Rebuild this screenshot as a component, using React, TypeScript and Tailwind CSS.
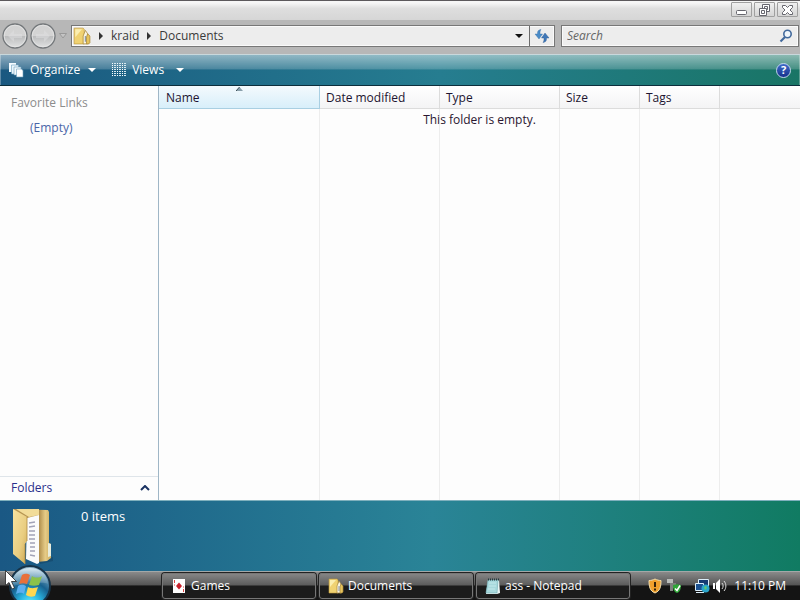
import React from "react";

const columns = [
  { label: "Name", width: "w-[161px]" },
  { label: "Date modified", width: "w-[120px]" },
  { label: "Type", width: "w-[120px]" },
  { label: "Size", width: "w-[80px]" },
  { label: "Tags", width: "w-[80px]" },
];

function FolderIcon({ size }: { size: string }) {
  return (
    <svg viewBox="0 0 16 16" className={size} aria-hidden="true">
      <path d="M1 1h8l1 1v13H1z" fill="#f0d272" stroke="#c09a3c" strokeWidth="0.6" />
      <path d="M2 2h6L2 9z" fill="#fbeeb0" />
      <path d="M9 8l2-5 2 3v9H9z" fill="#faf5e2" stroke="#a98838" strokeWidth="0.7" />
      <path d="M13 6l2 2v6l-1 1h-2V9z" fill="#e6c45e" stroke="#a98838" strokeWidth="0.7" />
      <path d="M11 8v5" stroke="#8996a8" />
    </svg>
  );
}

function LargeFolder() {
  return (
    <svg viewBox="0 0 42 60" className="h-[60px] w-[42px]" aria-hidden="true">
      <defs>
        <linearGradient id="lf-front" x1="0" x2="1" y1="0" y2="1">
          <stop offset="0" stopColor="#f7e3a0" />
          <stop offset="0.6" stopColor="#e9cd80" />
          <stop offset="1" stopColor="#cba650" />
        </linearGradient>
        <linearGradient id="lf-back" x1="0" x2="1">
          <stop offset="0" stopColor="#b59452" />
          <stop offset="0.7" stopColor="#b59452" />
          <stop offset="0.85" stopColor="#e6cb86" />
          <stop offset="1" stopColor="#cdae62" />
        </linearGradient>
      </defs>
      <path d="M28 53l13-4v4l-13 3z" fill="#123f60" opacity="0.5" />
      <path d="M1 1l35 1 1 2v31l2 1v14l-4 3-10 1z" fill="url(#lf-back)" />
      <path d="M36 35l3 1v12l-3 1z" fill="#e8ecdc" />
      <path d="M4 1h23v6L17 9z" fill="#f2dc98" />
      <path d="M15 10l12-3v48l-2 1-11-5z" fill="#fbfbfb" />
      <path d="M17 15l6-1M17 19l6-1M17 23h6M17 27h6M17 31h6M18 35h5M18 39h5M18 43h5M18 47l5 1" stroke="#a2a3b7" strokeWidth="1.5" />
      <path d="M1 1l14 8v24l-2 3v20L1 46z" fill="url(#lf-front)" />
      <path d="M13 36v20M15 9v24" stroke="#b08b3f" strokeWidth="0.8" />
    </svg>
  );
}

function NavArrow({ back }: { back?: boolean }) {
  return (
    <svg viewBox="0 0 26 26" className="size-[26px]" aria-hidden="true">
      <defs>
        <linearGradient id="nav-fill" x2="0" y2="1">
          <stop offset="0" stopColor="#d2d2d2" />
          <stop offset="0.48" stopColor="#d4d4d4" />
          <stop offset="0.52" stopColor="#bcbdbe" />
          <stop offset="1" stopColor="#e2e3e3" />
        </linearGradient>
      </defs>
      <circle cx="13" cy="13" r="12" fill="url(#nav-fill)" stroke="#73777a" strokeWidth="1.3" />
      <circle cx="13" cy="13" r="10.800" fill="none" stroke="#e6e6e6" strokeWidth="0.8" />
      <path
        d={back ? "M6 13l6-6v4h8v4h-8v4z" : "M20 13l-6-6v4H6v4h8v4z"}
        fill="#dfe0e1"
        opacity="0.5"
      />
    </svg>
  );
}

function Triangle() {
  return (
    <svg viewBox="0 0 8 4" className="h-1 w-2" aria-hidden="true">
      <path d="M0 0h8L4 4z" fill="currentColor" />
    </svg>
  );
}

function Chevron() {
  return (
    <svg viewBox="0 0 4 8" className="h-2 w-1 text-[#333]" aria-hidden="true">
      <path d="M0 0l4 4-4 4z" fill="currentColor" />
    </svg>
  );
}

function OrganizeIcon() {
  return (
    <svg viewBox="0 0 16 16" className="size-4" aria-hidden="true">
      <path d="M1 1h7v9H1z" fill="#f4fbff" />
      <path d="M3.500 3h7v9h-7z" fill="#eaf6fc" stroke="#6ba0bd" strokeWidth="0.6" />
      <path d="M6 5h7v8H6z" fill="#f3fafd" stroke="#6ba0bd" strokeWidth="0.6" />
      <path d="M8.500 7h5l1.500 1.500V15H8.500z" fill="#fff" stroke="#6ba0bd" strokeWidth="0.6" />
    </svg>
  );
}

function ViewsIcon() {
  return (
    <svg viewBox="0 0 14 14" className="size-[14px]" aria-hidden="true">
      <path d="M.5 0v14M5.500 0v14M10.500 0v14" stroke="#fff" strokeDasharray="1 1" />
      <path d="M3 0v14M8 0v14M13 0v14" stroke="#d7eaf1" strokeWidth="2" strokeDasharray="1 1" />
    </svg>
  );
}

function WindowButton({ kind }: { kind: "Minimize" | "Restore" | "Close" }) {
  return (
    <button
      type="button"
      aria-label={kind}
      className="flex h-[15px] w-[21px] items-center justify-center rounded-[1px] border border-[#a0a0a0] bg-linear-to-b from-[#f0f0f0] to-[#d5d5d5]"
    >
      <svg viewBox="0 0 13 12" className="h-3 w-[13px] shrink-0" fill="none" stroke="#66666e" aria-hidden="true">
        {kind === "Minimize" && <rect x="1.500" y="6.500" width="10" height="4" rx="1" fill="#fff" />}
        {kind === "Restore" && (
          <>
            <path d="M4.500.500h7v7h-7z" fill="#fff" />
            <path d="M6.500 2.500h3v3h-3z" />
            <path d="M1.500 4.500h7v7h-7z" fill="#fff" />
            <path d="M3.500 6.500h3v3h-3z" />
          </>
        )}
        {kind === "Close" && (
          <path
            d="M1.500 1.500h3l2 2 2-2h3v2L9 6l2.500 2.500v2h-3l-2-2-2 2h-3v-2L4 6 1.500 3.500z"
            fill="#fff"
          />
        )}
      </svg>
    </button>
  );
}

function RefreshIcon() {
  return (
    <svg viewBox="0 0 16 16" className="size-4" aria-hidden="true">
      <path d="M7 1.500C3.500 2 3.500 4 3.500 6H1l4 5 3.500-5H6c0-2 0-3 1-4.500z" fill="#4a8cc8" stroke="#3a6fa8" strokeWidth="0.4" />
      <path d="M9 14.500c3.500-.500 3.500-2.500 3.500-4.500H15l-4-5-3.500 5H10c0 2 0 3-1 4.500z" fill="#3f78b8" stroke="#2a5590" strokeWidth="0.4" />
    </svg>
  );
}

function StartOrb() {
  return (
    <svg viewBox="0 0 42 42" className="size-[42px]" aria-hidden="true">
      <defs>
        <radialGradient id="orb" cx="0.5" cy="0.95" r="0.9">
          <stop offset="0" stopColor="#6af0ff" />
          <stop offset="0.3" stopColor="#2ab4e0" />
          <stop offset="0.6" stopColor="#17618f" />
          <stop offset="1" stopColor="#8fb5ca" />
        </radialGradient>
        <linearGradient id="orb-gloss" x2="0" y2="1">
          <stop offset="0" stopColor="#e2f0f7" stopOpacity="0.9" />
          <stop offset="1" stopColor="#7fa9c1" stopOpacity="0.3" />
        </linearGradient>
      </defs>
      <circle cx="21" cy="21" r="20" fill="url(#orb)" stroke="#173348" strokeWidth="2" />
      <path d="M3 19C4 8 12 3 21 3s17 5 18 16c-9-4-27 4-36 0z" fill="url(#orb-gloss)" />
      <path d="M13 10c3-2 6-1 8 0l-3 9c-3-1-5-1-8 0z" fill="#e8703a" />
      <path d="M23 11c3 2 7 2 10 0l-3 9c-3 1-7 1-10 0z" fill="#8cc24a" />
      <path d="M9 21c3-2 6-1 8 0l-2 8c-3-2-5-1-8 0z" fill="#5caef0" />
      <path d="M19 22c3 2 7 1 10 0l-3 9c-3 1-6 1-9-1z" fill="#ffd750" />
    </svg>
  );
}

function CardIcon() {
  return (
    <svg viewBox="0 0 16 16" className="size-4" aria-hidden="true">
      <path d="M2 1h12v14H2z" fill="#fff" />
      <path d="M8 4.500l3 3.500-3 3.500L5 8z" fill="#c9202b" />
      <path d="M3.500 2v3M12.500 11v3M3 7h1M12 9h1" stroke="#d44" />
    </svg>
  );
}

function NotepadIcon() {
  return (
    <svg viewBox="0 0 16 16" className="size-4" aria-hidden="true">
      <path d="M3 2h11l1 13-3 1H1z" fill="#e9f6f6" />
      <path d="M3 2h10l-1 13H1z" fill="#a8d9dd" stroke="#6fa9b0" strokeWidth="0.6" />
      <path d="M3 1.500h11" stroke="#27383c" strokeWidth="2" strokeDasharray="1 1" />
      <path d="M4 5h7M4 8h7M3 11h7" stroke="#c4e9eb" />
    </svg>
  );
}

function TaskButton({ icon, label }: { icon: React.ReactNode; label: string }) {
  return (
    <button
      type="button"
      className="flex h-[26px] w-[154px] min-w-0 items-center gap-1 rounded-[3px] border border-[#777] bg-linear-to-b from-[#858585] from-0% via-[#5c5c5c] via-46% to-[#1c1c1c] to-50% px-2 pb-px text-left text-white shadow-[0_0_0_1px_#222]"
    >
      {icon}
      <span className="truncate">{label}</span>
    </button>
  );
}

export default function App() {
  return (
    <div className="flex h-screen flex-col overflow-hidden bg-white font-['Open_Sans','Noto_Sans',sans-serif] text-xs leading-4 text-[#222]">
      <header>
        <div className="flex h-5 items-start justify-end gap-[2px] border-t border-[#5c595c] bg-linear-to-b from-[#f6f6f6] from-10% via-[#dedede] via-40% to-[#d6d6d6] pt-px pr-[2px]">
          <WindowButton kind="Minimize" />
          <WindowButton kind="Restore" />
          <WindowButton kind="Close" />
        </div>
        <nav className="flex h-[34px] items-center bg-[#b7b7b7] pr-px pb-[2px] pl-[2px]">
          <button type="button" aria-label="Back" className="mr-[2px]">
            <NavArrow back />
          </button>
          <button type="button" aria-label="Forward">
            <NavArrow />
          </button>
          <button type="button" aria-label="Recent pages" className="mr-1 ml-[3px]">
            <svg viewBox="0 0 8 6" className="h-[6px] w-2" aria-hidden="true">
              <path d="M.5.500h7L4 5z" fill="#c4c4c4" stroke="#999" />
            </svg>
          </button>
          <div className="flex h-[22px] min-w-0 flex-1 items-center border border-[#777] bg-[#ededed] pl-px shadow-[inset_0_0_0_1px_#fafafa]">
            <FolderIcon size="size-[18px] mr-2" />
            <Chevron />
            <a href="#kraid" className="mx-2 text-[#3a3a3a]">kraid</a>
            <Chevron />
            <a href="#documents" className="ml-2 text-[#3a3a3a]">Documents</a>
            <button type="button" aria-label="Previous locations" className="mr-[6px] ml-auto text-[#111]">
              <Triangle />
            </button>
            <button type="button" aria-label="Refresh" className="flex h-5 w-[25px] items-center justify-center border-l border-[#6c6c6c]">
              <RefreshIcon />
            </button>
          </div>
          <div className="ml-[6px] flex h-[22px] w-[238px] items-center border border-[#777] bg-[#ededed] pr-[5px] pl-[5px] shadow-[inset_0_0_0_1px_#fafafa]">
            <input
              type="text"
              aria-label="Search"
              placeholder="Search"
              className="min-w-0 flex-1 bg-transparent italic outline-none placeholder:text-[#666]"
            />
            <svg viewBox="0 0 14 14" className="size-[14px]" fill="none" aria-hidden="true">
              <circle cx="8.500" cy="5" r="3.700" fill="#eef5fb" stroke="#41699c" strokeWidth="1.600" />
              <path d="M6 8l-4.500 4.500" stroke="#41699c" strokeWidth="2.200" />
            </svg>
          </div>
        </nav>
      </header>

      <div className="flex h-8 items-center border-t border-b border-t-[#c9d8dc] border-b-[#0c2e3c] bg-linear-to-r from-[#1a5880] via-[#267d90] via-55% to-[#197565]">
        <div className="flex h-full flex-1 items-center border-x border-white/30 bg-linear-to-b from-white/50 from-0% via-white/20 via-46% to-white/0 to-50% px-[7px] text-white">
          <button type="button" className="flex items-center">
            <OrganizeIcon />
            <span className="mr-2 ml-[6px]">Organize</span>
            <Triangle />
          </button>
          <button type="button" className="ml-4 flex items-center">
            <ViewsIcon />
            <span className="mr-3 ml-[6px]">Views</span>
            <Triangle />
          </button>
          <button type="button" aria-label="Help" className="mr-px ml-auto">
            <span className="flex size-[15px] items-center justify-center rounded-full border border-[#c3d5ee] bg-linear-to-b from-[#3f6cc9] to-[#17308c] text-[11px] leading-3 font-bold">?</span>
          </button>
        </div>
      </div>

      <main className="flex min-h-0 flex-1">
        <aside className="flex w-[159px] shrink-0 flex-col border-r border-[#9fb6c6] bg-[#fdfdfd]">
          <h2 className="px-[11px] pt-[9px] text-[#8c8c8c]">Favorite Links</h2>
          <p className="mt-[9px] px-[30px] text-[#4a66a8]">(Empty)</p>
          <button type="button" className="mt-auto flex h-6 items-center justify-between border-t border-[#dfe5ea] pr-2 pb-px pl-[11px] text-[#2a2f8c]">
            Folders
            <svg viewBox="0 0 10 6" className="h-[6px] w-[10px]" fill="none" stroke="#1a3262" strokeWidth="2" aria-hidden="true">
              <path d="M1 5l4-4 4 4" />
            </svg>
          </button>
        </aside>
        <section className="relative min-w-0 flex-1 bg-[#fdfdfd]">
          <table className="h-full w-full table-fixed border-separate border-spacing-0">
            <thead>
              <tr className="h-[23px]">
                {columns.map((column, index) => (
                  <th
                    key={column.label}
                    scope="col"
                    className={`${column.width} border-r border-b px-0 pt-px pb-0 text-left font-normal text-[#1c1430] ${
                      index === 0
                        ? "border-[#a9cfe2] bg-linear-to-b from-[#f4fafd] to-[#d8effa] pl-[7px]"
                        : "border-[#dcdcdc] bg-linear-to-b from-white to-[#f4f4f5] pl-[6px]"
                    }`}
                  >
                    <div className="relative">
                      {column.label}
                      {index === 0 && (
                        <svg viewBox="0 0 7 4" className="absolute -top-[3px] left-[70px] h-1 w-[7px]" aria-hidden="true">
                          <path d="M0 4l3.500-4L7 4z" fill="#8aa0ac" />
                          <path d="M0 4l3.500-4" stroke="#3a4c56" />
                        </svg>
                      )}
                    </div>
                  </th>
                ))}
                <td className="border-b border-[#dcdcdc] bg-linear-to-b from-white to-[#f4f4f5]" />
              </tr>
            </thead>
            <tbody>
              <tr>
                {columns.map((column) => (
                  <td key={column.label} className="border-r border-[#ededed]" />
                ))}
                <td />
              </tr>
            </tbody>
          </table>
          <p className="absolute inset-x-0 top-[26px] text-center text-[#2a1630]">This folder is empty.</p>
        </section>
      </main>

      <section className="flex h-[71px] shrink-0 items-start border-t border-[#7fb0bd] bg-linear-to-r from-[#1a5884] via-[#2a8497] via-54% to-[#107b62] pt-[7px] pl-3">
        <LargeFolder />
        <p className="ml-[27px] text-[13px] text-white">0 items</p>
      </section>

      <footer className="relative flex h-[29px] shrink-0 items-center border-t border-[#a3a8a8] bg-linear-to-b from-[#8a8a8a] from-0% via-[#555] via-46% to-[#141414] to-50% pl-[162px] text-white">
        <button type="button" aria-label="Start" className="absolute -top-[7px] left-[9px]">
          <StartOrb />
        </button>
        <svg viewBox="0 0 12 20" className="absolute -top-[2px] left-[5px] h-5 w-3" aria-hidden="true">
          <path d="M.5.500v15l3.500-3 3 6.500 2.500-1-3-6.500h5z" fill="#fff" stroke="#222" strokeWidth="0.800" />
        </svg>
        <div className="flex gap-[3px]">
          <TaskButton icon={<CardIcon />} label="Games" />
          <TaskButton icon={<FolderIcon size="size-4" />} label="Documents" />
          <TaskButton icon={<NotepadIcon />} label="ass - Notepad" />
        </div>
        <div className="ml-auto flex items-center pr-[14px] pb-px">
          <svg viewBox="0 0 16 16" className="size-4" aria-hidden="true">
            <path d="M8 1c2 1 4 1.500 6 1.500C14 9 13 13 8 15 3 13 2 9 2 2.500 4 2.500 6 2 8 1z" fill="#f0a02d" stroke="#f3dfae" />
            <path d="M8 4v5M8 10.500v2" stroke="#33220a" strokeWidth="2" />
          </svg>
          <svg viewBox="0 0 16 16" className="ml-[3px] size-4" aria-hidden="true">
            <path d="M1 1h6v4H1z" fill="#b9bcb9" />
            <path d="M4 5h6v5H4zM4 10h3v3H4z" fill="#7d807d" />
            <path d="M7 7c3 0 4-1 4-1s2 1 4 1c0 4-1 7-4 8-3-1-4-4-4-8z" fill="#2fa637" />
            <path d="M9 10.500l2 2 3-5" fill="none" stroke="#fff" strokeWidth="1.500" />
          </svg>
          <svg viewBox="0 0 16 16" className="ml-3 size-4" aria-hidden="true">
            <path d="M4.500 1.500h10v8h-10z" fill="#163a72" stroke="#dceefa" />
            <path d="M1.500 5.500h8v7h-8zM2 14.500h8" fill="#1b5192" stroke="#dceefa" />
            <circle cx="11.500" cy="10.500" r="4" fill="#2aa5cb" />
            <path d="M10 9l2-1 1 2-2 2z" fill="#62c96b" />
          </svg>
          <svg viewBox="0 0 16 16" className="ml-[2px] size-4" aria-hidden="true">
            <path d="M1 5h2v6H1zM4 5l4-4v14l-4-4z" fill="#fff" />
            <path d="M10 5c1.500 2 1.500 4 0 6M12 3c2.500 3 2.500 7 0 10" fill="none" stroke="#ddd" />
          </svg>
          <time className="ml-[6px]">11:10 PM</time>
        </div>
      </footer>
    </div>
  );
}
